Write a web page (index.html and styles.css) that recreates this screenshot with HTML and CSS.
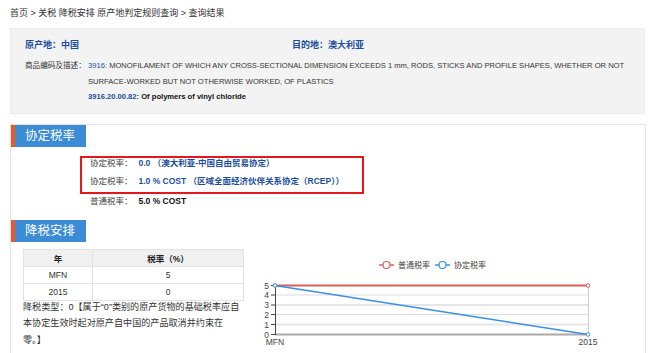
FILE: index.html
```html
<!DOCTYPE html>
<html lang="zh-CN">
<head>
    <meta charset="UTF-8">
    <title>查询结果</title>
    <link rel="stylesheet" href="styles.css">
</head>
<body>
    <div class="crumb">首页 &gt; 关税 降税安排 原产地判定规则查询 &gt; 查询结果</div>

    <div class="info">
        <div class="place-row">
            <div class="place origin">原产地：中国</div>
            <div class="place">目的地：澳大利亚</div>
        </div>
        <div class="desc-row">
            <div class="desc-label">商品编码及描述：</div>
            <div class="desc-body">
                <p><span class="code">3916:</span> MONOFILAMENT OF WHICH ANY CROSS-SECTIONAL DIMENSION EXCEEDS 1 mm, RODS, STICKS AND PROFILE SHAPES, WHETHER OR NOT SURFACE-WORKED BUT NOT OTHERWISE WORKED, OF PLASTICS</p>
                <p class="sub"><span class="code">3916.20.00.82:</span> Of polymers of vinyl chloride</p>
            </div>
        </div>
    </div>

    <div class="panel">
        <div class="section-title">协定税率</div>
        <div class="rates">
            <div class="rate-box">
                <div class="rate-row"><span class="rate-label">协定税率：</span><span class="rate-value">0.0 （澳大利亚-中国自由贸易协定）</span></div>
                <div class="rate-row"><span class="rate-label">协定税率：</span><span class="rate-value">1.0 % COST （区域全面经济伙伴关系协定（RCEP））</span></div>
            </div>
            <div class="rate-row plain"><span class="rate-label">普通税率：</span><span class="rate-value black">5.0 % COST</span></div>
        </div>

        <div class="section-title">降税安排</div>
        <div class="schedule">
            <div class="schedule-left">
                <table class="cut-table">
                    <tr><th class="col-year">年</th><th>税率（%）</th></tr>
                    <tr><td>MFN</td><td>5</td></tr>
                    <tr><td>2015</td><td>0</td></tr>
                </table>
                <p class="cut-note">降税类型：0【属于“0”类别的原产货物的基础税率应自本协定生效时起对原产自中国的产品取消并约束在<br>零。】</p>
            </div>
            <svg class="chart" width="395" height="108" viewBox="0 0 395 108">
                <g class="legend">
                    <line x1="134" y1="18" x2="149" y2="18" stroke="#d9605c" stroke-width="1.5"/>
                    <circle cx="141.5" cy="18" r="3.5" fill="#fff" stroke="#d9605c" stroke-width="1.2"/>
                    <text x="153" y="21">普通税率</text>
                    <line x1="190" y1="18" x2="205" y2="18" stroke="#3a8ee6" stroke-width="1.5"/>
                    <circle cx="197.5" cy="18" r="3.5" fill="#fff" stroke="#3a8ee6" stroke-width="1.2"/>
                    <text x="209" y="21">协定税率</text>
                </g>
                <g class="grid">
                    <line x1="30" y1="48" x2="343" y2="48" stroke="#ddd"/>
                    <line x1="30" y1="58" x2="343" y2="58" stroke="#e6e6e6" stroke-width="2"/>
                    <line x1="30" y1="67.5" x2="343" y2="67.5" stroke="#ddd"/>
                    <line x1="30" y1="77.5" x2="343" y2="77.5" stroke="#e6e6e6" stroke-width="2"/>
                    <line x1="343.5" y1="38" x2="343.5" y2="87" stroke="#ccc"/>
                    <line x1="30" y1="87.5" x2="343" y2="87.5" stroke="#aaa" stroke-width="2"/>
                    <line x1="30.5" y1="38" x2="30.5" y2="88" stroke="#444"/>
                    <path d="M26 38.5h4M26 48h4M26 58h4M26 67.5h4M26 77.5h4M26 87.5h4" stroke="#444"/>
                </g>
                <g class="axis-labels">
                    <text x="24" y="41.5" text-anchor="end">5</text>
                    <text x="24" y="51" text-anchor="end">4</text>
                    <text x="24" y="61" text-anchor="end">3</text>
                    <text x="24" y="70.5" text-anchor="end">2</text>
                    <text x="24" y="80.5" text-anchor="end">1</text>
                    <text x="24" y="90.5" text-anchor="end">0</text>
                    <text x="30" y="98" text-anchor="middle">MFN</text>
                    <text x="343" y="98" text-anchor="middle">2015</text>
                </g>
                <line x1="30" y1="38.5" x2="343" y2="38.5" stroke="#d9605c" stroke-width="2"/>
                <circle cx="343" cy="38.5" r="1.8" fill="#fff" stroke="#d9605c"/>
                <line x1="30" y1="38.5" x2="343" y2="87.5" stroke="#3a8ee6" stroke-width="1.5"/>
                <circle cx="30" cy="38.5" r="1.8" fill="#fff" stroke="#3a8ee6"/>
                <circle cx="343" cy="87.5" r="1.8" fill="#fff" stroke="#3a8ee6"/>
            </svg>
        </div>
    </div>
</body>
</html>
```

FILE: styles.css
```css
body {
    margin: 0;
    font-family: "Liberation Sans", "Noto Sans CJK SC", sans-serif;
    font-size: 9px;
    color: #333;
    background-color: #fff;
}
.crumb {
    height: 28px;
    line-height: 26px;
    padding-left: 10px;
    font-size: 9px;
    color: #333;
}
.info {
    margin: 0 5px 0 10px;
    padding: 10px 14px 8px;
    background-color: #f3f3f3;
    border: 1px solid #ebebeb;
}
.place-row {
    display: flex;
    height: 12px;
    line-height: 12px;
    margin-bottom: 7px;
}
.place {
    font-size: 9px;
    font-weight: bold;
    color: #1b4f9c;
}
.origin {
    width: 267px;
}
.desc-row {
    display: flex;
    font-size: 7.6px;
    line-height: 15.5px;
}
.desc-label {
    width: 63px;
    flex-shrink: 0;
}
.desc-body p {
    margin: 0;
}
.code {
    color: #1b4f9c;
}
.desc-body .sub {
    font-weight: bold;
    color: #111;
}
.panel {
    margin: 10px 4px 0 10px;
    height: 240px;
    border: 1px solid #e6e6e6;
    border-bottom: none;
}
.section-title {
    display: inline-block;
    height: 22px;
    line-height: 22px;
    padding: 0 11px 0 10px;
    border-left: 4px solid #f0571f;
    background-color: #3b8cd5;
    color: #fff;
    font-size: 12.5px;
}
.rates {
    padding: 9px 0 12px 69px;
}
.rate-box {
    width: 280px;
    border: 2px solid #e5161c;
}
.rate-row {
    line-height: 10px;
    padding-left: 8px;
    font-size: 8.5px;
}
.rate-box .rate-row:first-child {
    padding-bottom: 8px;
}
.rate-box .rate-row:last-child {
    padding-bottom: 6px;
}
.rate-row.plain {
    line-height: 14px;
    padding-left: 10px;
}
.rate-label {
    color: #444;
    margin-right: 6px;
}
.rate-value {
    font-weight: bold;
    color: #1b4f9c;
}
.rate-value.black {
    color: #111;
}
.schedule {
    display: flex;
    align-items: flex-start;
    padding: 7px 0 0 12px;
}
.schedule-left {
    width: 221px;
    flex-shrink: 0;
}
.cut-table {
    width: 100%;
    border-collapse: collapse;
    font-size: 8.5px;
    text-align: center;
}
.cut-table th,
.cut-table td {
    height: 16px;
    padding: 0;
    border: 1px solid #e3e3e3;
}
.cut-table th {
    background-color: #f0f0f0;
    font-weight: bold;
    color: #222;
}
.col-year {
    width: 68px;
}
.cut-note {
    margin: -2px 0 0;
    font-size: 9.1px;
    line-height: 16.5px;
}
.chart {
    display: block;
    flex-shrink: 0;
    margin: -2px 0 0 1px;
}
.chart text {
    font-family: "Liberation Sans", "Noto Sans CJK SC", sans-serif;
    font-size: 8.5px;
    fill: #444;
}
.chart .legend text {
    font-size: 8px;
}
```
